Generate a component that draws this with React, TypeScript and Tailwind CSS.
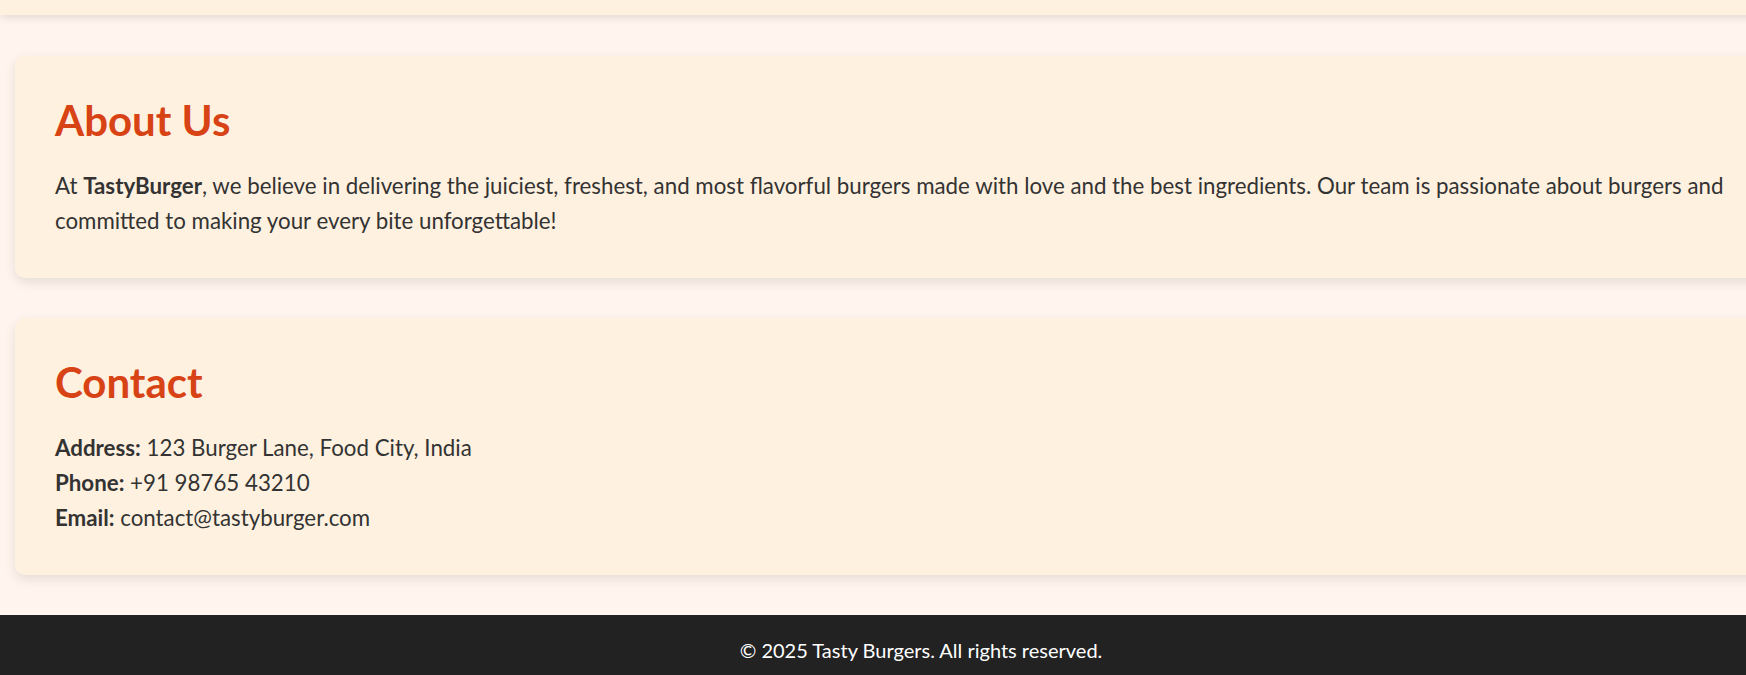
const Card = ({ title, children }: { title: string; children: React.ReactNode }) => {
    return (
        <section className="mx-[15px] rounded-[10px] bg-[#fff1df] p-[40px] shadow-[0_4px_12px_rgba(0,0,0,0.1)]">
            <h2 className="mb-[24px] text-[42px] leading-[48px] font-bold text-[#d84315]">{title}</h2>
            {children}
        </section>
    );
};

const App = () => {
    return (
        <div className="w-full min-h-screen overflow-hidden bg-[#fff5ee] font-['Lato',sans-serif] text-[#333]">
            <div className="w-[1842px]">
                <header className="h-[15px] w-full bg-[#fff1df] shadow-[0_2px_10px_rgba(0,0,0,0.12)]"></header>

                <main className="flex flex-col gap-[40px] pt-[41px] pb-[40px]">
                    <Card title="About Us">
                        <p className="text-[22.3px] leading-[35px]">
                            At <strong className="font-bold">TastyBurger</strong>, we believe in delivering the juiciest, freshest, and most flavorful burgers made with love and the best ingredients. Our team is passionate about burgers and committed to making your every bite unforgettable!
                        </p>
                    </Card>

                    <Card title="Contact">
                        <div className="text-[22.3px] leading-[35px]">
                            <p><strong className="font-bold">Address:</strong> 123 Burger Lane, Food City, India</p>
                            <p><strong className="font-bold">Phone:</strong> +91 98765 43210</p>
                            <p><strong className="font-bold">Email:</strong> contact@tastyburger.com</p>
                        </div>
                    </Card>
                </main>

                <footer className="bg-[#222] py-[20px] text-center text-[20px] leading-[30px] text-white">
                    © 2025 Tasty Burgers. All rights reserved.
                </footer>
            </div>
        </div>
    );
};

export default App;
